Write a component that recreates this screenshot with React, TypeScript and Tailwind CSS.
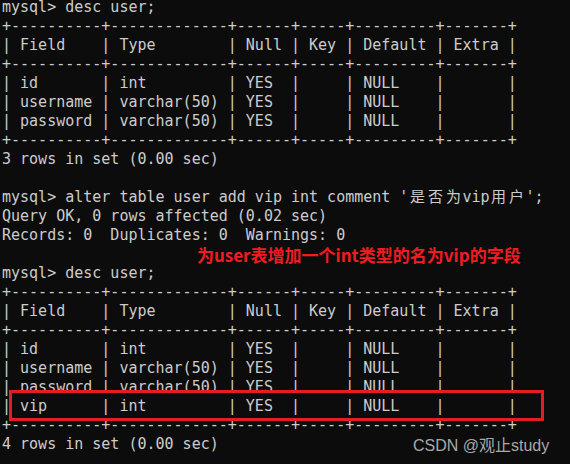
import React from "react";

const mono = '"DejaVu Sans Mono", "Noto Sans CJK SC", monospace';

function Wide({ ch }: { ch: string }) {
  return <span className="inline-block w-[18px] text-center">{ch}</span>;
}

function Line({ children }: { children?: React.ReactNode }) {
  return <div className="h-[19px] leading-[19px] whitespace-pre">{children}</div>;
}

const sep = "+----------+-------------+------+-----+---------+-------+";
const header = "| Field    | Type        | Null | Key | Default | Extra |";
const rows = [
  "| id       | int         | YES  |     | NULL    |       |",
  "| username | varchar(50) | YES  |     | NULL    |       |",
  "| password | varchar(50) | YES  |     | NULL    |       |",
];
const vipRow = "| vip      | int         | YES  |     | NULL    |       |";

export default function App() {
  return (
    <div className="relative w-[570px] h-[464px] overflow-hidden bg-[#0c0c0c] text-[#cccccc]">
      <div className="-mt-[2px] pl-[2px] flex flex-col text-[15px]" style={{ fontFamily: mono }}>
        <Line>mysql&gt; desc user;</Line>
        <Line>{sep}</Line>
        <Line>{header}</Line>
        <Line>{sep}</Line>
        {rows.map((r) => (
          <Line key={"a" + r}>{r}</Line>
        ))}
        <Line>{sep}</Line>
        <Line>3 rows in set (0.00 sec)</Line>
        <Line> </Line>
        <Line>
          {"mysql> alter table user add vip int comment '"}
          <Wide ch="是" />
          <Wide ch="否" />
          <Wide ch="为" />
          {"vip"}
          <Wide ch="用" />
          <Wide ch="户" />
          {"';"}
        </Line>
        <Line>Query OK, 0 rows affected (0.02 sec)</Line>
        <Line>Records: 0  Duplicates: 0  Warnings: 0</Line>
        <div className="h-[19px] leading-[19px] pl-[195px]">
          <span
            className="text-[17px] font-bold text-[#f01c22] whitespace-pre"
            style={{ fontFamily: '"Noto Sans CJK SC", "Noto Sans", sans-serif' }}
          >
            为user表增加一个int类型的名为vip的字段
          </span>
        </div>
        <Line>mysql&gt; desc user;</Line>
        <Line>{sep}</Line>
        <Line>{header}</Line>
        <Line>{sep}</Line>
        {rows.map((r) => (
          <Line key={"b" + r}>{r}</Line>
        ))}
        <div className="relative z-10 h-[19px] leading-[19px] whitespace-pre">{vipRow}</div>
        <Line>{sep}</Line>
        <Line>4 rows in set (0.00 sec)</Line>
      </div>
      <div className="absolute left-[9px] top-[390px] w-[535px] h-[31px] border-[3px] border-[#e41d25] bg-[#0c0c0c]" />
      <div
        className="absolute left-[413px] top-[438px] text-[16px] leading-[16px] text-[#a9a9a9] whitespace-pre"
        style={{ fontFamily: '"Liberation Sans", "Noto Sans CJK SC", sans-serif' }}
      >
        CSDN @观止study
      </div>
    </div>
  );
}
